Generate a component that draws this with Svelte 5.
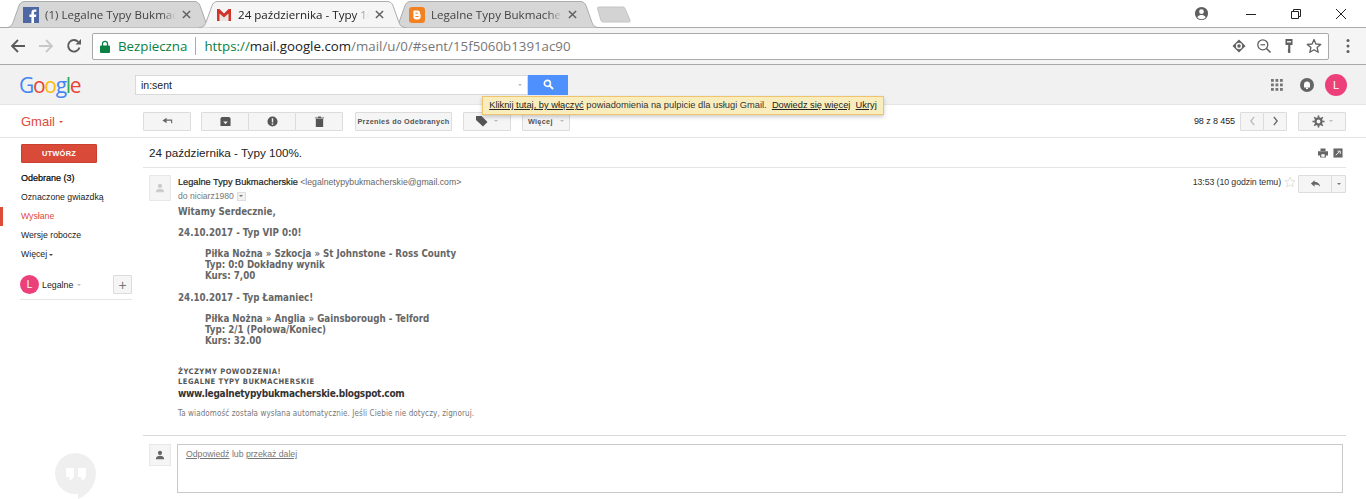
<script>
  const tabs = [
    { title: '(1) Legalne Typy Bukmacherskie', icon: 'fb', active: false },
    { title: '24 października - Typy 100%.', icon: 'gm', active: true },
    { title: 'Legalne Typy Bukmacherskie', icon: 'bl', active: false }
  ];
  const folders = [
    { label: 'Odebrane (3)', cls: 'strong' },
    { label: 'Oznaczone gwiazdką', cls: '' },
    { label: 'Wysłane', cls: 'current' },
    { label: 'Wersje robocze', cls: '' }
  ];
</script>

<div class="page">
  <div class="tabstrip">
    {#each tabs as tab}
      <div class="tab" class:active={tab.active}>
        <svg class="tabshape" viewBox="0 0 208 28" preserveAspectRatio="none">
          <path d="M0 27.5 C5 27.5 6 25 7.5 21 L13 5 C14 2 16 .5 19 .5 H189 C192 .5 194 2 195 5 L200.500 21 C202 25 203 27.500 208 27.500" fill={tab.active ? '#f5f5f5' : '#d6d6d6'} stroke="#a9a9a9" />
        </svg>
        {#if tab.icon === 'fb'}
          <svg class="fav" viewBox="0 0 16 16"><rect width="16" height="16" fill="#4c67a1" /><path d="M11 16V10h2l.3-2.500H11V6c0-.8.3-1.200 1.200-1.200h1.200V2.600C13 2.500 12.300 2.500 11.500 2.500 9.600 2.500 8.400 3.600 8.400 5.700v1.800H6.400V10h2v6z" fill="#fff" /></svg>
        {:else if tab.icon === 'gm'}
          <svg class="fav" viewBox="0 0 16 16"><path d="M3.500 6.500V14h9V6.500L8 10.500z" fill="#e9e6e2" /><path d="M1 2h2.500L8 6.500 12.500 2H15v12h-2.500V6.500L8 10.500 3.500 6.500V14H1z" fill="#d0352a" /></svg>
        {:else}
          <svg class="fav" viewBox="0 0 16 16"><rect width="16" height="16" rx="3" fill="#f48120" /><path d="M5 3.500h3.800a2.200 2.200 0 0 1 2.200 2.200v1.300h.6v2.800A2.700 2.700 0 0 1 8.900 12.500H7.100a2.700 2.700 0 0 1-2.700-2.700V4.100A.6.6 0 0 1 5 3.500z" fill="#fff" /><path d="M6.400 5.700h2.400v1.100H6.400zM6.400 9h3.200v1.100H6.400z" fill="#f48120" /></svg>
        {/if}
        <span class="tabtitle">{tab.title}</span>
        <svg class="tabx" viewBox="0 0 10 10"><path d="M1 1l8 8M9 1l-8 8" stroke="#5f5f5f" stroke-width="1.600" /></svg>
      </div>
    {/each}
    <svg class="newtab" viewBox="0 0 36 17"><path d="M1.500 2.500Q1.300 1 3 1H27Q28.500 1 29 2.500L34 14Q34.500 16 33 16H7Q5.500 16 5 14.500z" fill="#d3d3d3" stroke="#c4c4c4" /></svg>
    <div class="winctl">
      <svg class="prof" viewBox="0 0 16 16"><circle cx="8" cy="8" r="7" fill="#5f5f5f" /><circle cx="8" cy="6" r="2.500" fill="#fff" /><path d="M3.500 12c1-2 3-2.500 4.500-2.500s3.500.5 4.500 2.500C11.500 13.500 9.500 14 8 14s-3.500-.5-4.500-2z" fill="#fff" /></svg>
      <svg class="ctl" viewBox="0 0 12 12"><path d="M1 6.500h10" stroke="#222" /></svg>
      <svg class="ctl" viewBox="0 0 12 12"><path d="M1.500 3.500h7v7h-7zM3.500 3.500v-2h7v7h-2" fill="none" stroke="#222" /></svg>
      <svg class="ctl" viewBox="0 0 12 12"><path d="M1 1l10 10M11 1L1 11" stroke="#222" /></svg>
    </div>
  </div>

  <div class="toolbar">
    <svg class="nav" viewBox="0 0 16 16"><path d="M15 8H2M8 2L2 8l6 6" fill="none" stroke="#5a5a5a" stroke-width="1.800" /></svg>
    <svg class="nav" viewBox="0 0 16 16"><path d="M1 8h13M8 2l6 6-6 6" fill="none" stroke="#c8c8c8" stroke-width="1.800" /></svg>
    <svg class="nav" viewBox="0 0 16 16"><path d="M13.500 9.500A5.800 5.800 0 1 1 12.200 3.800" fill="none" stroke="#5a5a5a" stroke-width="1.900" /><path d="M9.500 6.500H15V1z" fill="#5a5a5a" /></svg>
    <div class="omnibox">
      <svg class="lock" viewBox="0 0 10 13"><path d="M2.500 6V3.800a2.500 2.500 0 0 1 5 0V6" fill="none" stroke="#0b8043" stroke-width="1.300" /><rect y="5.500" width="10" height="7.500" rx="1" fill="#0b8043" /></svg>
      <span class="secure">Bezpieczna</span>
      <span class="sep"></span>
      <span class="url"><span class="scheme">https://</span><span class="host">mail.google.com</span>/mail/u/0/#sent/15f5060b1391ac90</span>
      <span class="omnicons">
        <svg class="oi" viewBox="0 0 16 16"><path d="M8 1.500L14.500 8 8 14.500 1.500 8z" fill="#5f5f5f" /><circle cx="8" cy="8" r="3.200" fill="#f4f4f4" /><circle cx="8" cy="8" r="1.700" fill="#5f5f5f" /></svg>
        <svg class="oi" viewBox="0 0 16 16"><circle cx="6.800" cy="6.800" r="5" fill="none" stroke="#5f5f5f" stroke-width="1.300" /><path d="M10.500 10.500l4 4" stroke="#5f5f5f" stroke-width="1.600" /><path d="M4.500 6.800h4.600" stroke="#5f5f5f" stroke-width="1.200" /></svg>
        <svg class="oi" viewBox="0 0 16 16"><path d="M4.500 1h7v6H9.300v8H7.500l-.8-1 .5-1-.5-1 .5-1V7H4.500z" fill="#5f5f5f" /><rect x="6" y="3" width="4" height="1.500" fill="#eee" /></svg>
        <svg class="oi" viewBox="0 0 16 16"><path d="M8 1.500l1.900 4.500 4.800.4-3.600 3.200 1.100 4.700L8 11.800l-4.200 2.500 1.100-4.700L1.300 6.400 6.100 6z" fill="none" stroke="#5f5f5f" stroke-width="1.300" stroke-linejoin="round" /></svg>
      </span>
    </div>
    <svg class="dots" viewBox="0 0 4 16"><circle cx="2" cy="2.500" r="1.500" fill="#5f5f5f" /><circle cx="2" cy="8" r="1.500" fill="#5f5f5f" /><circle cx="2" cy="13.500" r="1.500" fill="#5f5f5f" /></svg>
  </div>

  <div class="gbar">
    <div class="logo"><span class="b">G</span><span class="r">o</span><span class="y">o</span><span class="b">g</span><span class="g">l</span><span class="r">e</span></div>
    <div class="search">
      <div class="searchbox"><span>in:sent</span><i class="caret grey"></i></div>
      <button class="searchbtn" aria-label="Szukaj">
        <svg viewBox="0 0 12 12"><circle cx="4.800" cy="4.800" r="3.300" fill="none" stroke="#fff" stroke-width="1.800" /><path d="M7.200 7.200l3.800 3.800" stroke="#fff" stroke-width="2.200" /></svg>
      </button>
    </div>
    <div class="gright">
      <svg class="apps" viewBox="0 0 12 12" fill="#757575">
        {#each [0, 4.500, 9] as y}
          {#each [0, 4.500, 9] as x}
            <rect {x} {y} width="2.800" height="2.800" />
          {/each}
        {/each}
      </svg>
      <svg class="bell" viewBox="0 0 14 14"><circle cx="7" cy="7" r="7" fill="#666" /><path d="M4 9.500V6.500a3 3 0 0 1 6 0v3z" fill="#fff" /><rect x="6" y="9.500" width="2" height="1.500" fill="#fff" /></svg>
      <span class="avatar big">L</span>
    </div>
  </div>

  <div class="notice">
    <a href="#n">Kliknij tutaj, by włączyć</a> powiadomienia na pulpicie dla usługi Gmail. &nbsp;<a href="#n">Dowiedz się więcej</a> &nbsp;<a href="#n">Ukryj</a>
  </div>

  <div class="actionrow">
    <div class="gmailname">Gmail <i class="caret red"></i></div>
    <div class="actions">
      <button class="btn w48" aria-label="Wróć">
        <svg viewBox="0 0 12 10"><path d="M5 1v6L.5 4z" fill="#666" /><path d="M4 3.500h6.500V7" fill="none" stroke="#666" stroke-width="1.200" /></svg>
      </button>
      <div class="group">
        <button class="btn w48" aria-label="Archiwizuj"><svg viewBox="0 0 12 11"><path d="M.5 2L2 .5h8L11.500 2v8.500H.5z" fill="#555" /><path d="M6 8.500L3.500 5.500h5z" fill="#eee" /></svg></button>
        <button class="btn w48" aria-label="Spam"><svg viewBox="0 0 12 12"><circle cx="6" cy="6" r="5.500" fill="#555" /><rect x="5.200" y="2.500" width="1.600" height="4.500" fill="#eee" /><rect x="5.200" y="8" width="1.600" height="1.600" fill="#eee" /></svg></button>
        <button class="btn w48" aria-label="Usuń"><svg viewBox="0 0 12 12"><path d="M2 3h8v9H2zM1 1.500h3.500V.5h3v1H11V2.500H1z" fill="#555" /></svg></button>
      </div>
      <button class="btn textbtn move">Przenieś do Odebranych</button>
      <button class="btn w48 label" aria-label="Etykiety"><svg viewBox="0 0 12 12"><path d="M0 1h5.500L11.500 7 7 11.500 0 5z" fill="#555" /></svg><i class="caret grey"></i></button>
      <button class="btn textbtn more">Więcej <i class="caret grey"></i></button>
    </div>
    <div class="pager">
      <span class="count">98 z 8 455</span>
      <div class="group">
        <button class="btn pg" aria-label="Nowsze"><svg viewBox="0 0 8 12"><path d="M6 1L2 6l4 5" fill="none" stroke="#bbb" stroke-width="1.600" /></svg></button>
        <button class="btn pg" aria-label="Starsze"><svg viewBox="0 0 8 12"><path d="M2 1l4 5-4 5" fill="none" stroke="#666" stroke-width="1.600" /></svg></button>
      </div>
      <button class="btn gear" aria-label="Ustawienia">
        <svg viewBox="0 0 14 14"><circle cx="7" cy="7" r="3.300" fill="none" stroke="#666" stroke-width="2.400" /><path d="M7 .5v13M.5 7h13M2.400 2.400l9.200 9.200M11.600 2.400l-9.200 9.200" stroke="#666" stroke-width="1.800" stroke-dasharray="2.400 8.200" /></svg>
        <i class="caret grey"></i>
      </button>
    </div>
  </div>

  <div class="content">
    <aside class="side">
      <button class="compose">UTWÓRZ</button>
      <nav class="folders">
        {#each folders as f}
          <div class="folder {f.cls}">{f.label}</div>
        {/each}
        <div class="folder">Więcej <i class="caret dark"></i></div>
      </nav>
      <div class="account">
        <span class="avatar">L</span>
        <span class="accname">Legalne</span>
        <i class="caret grey"></i>
        <button class="btn plus" aria-label="Nowa rozmowa">+</button>
      </div>
      <svg class="ghost" viewBox="0 0 41 46"><path d="M20.500 0a20.500 20.500 0 0 0 0 41H23V46C33 42 41 32 41 20.500A20.500 20.500 0 0 0 20.500 0z" fill="#efefef" /><path d="M11 15h8v7c0 3-2 5-4.500 5.500V24H11zM23 15h8v7c0 3-2 5-4.500 5.500V24H23z" fill="#fff" /></svg>
    </aside>

    <main class="thread">
      <div class="subject">
        <h2>24 października - Typy 100%.</h2>
        <span class="subicons">
          <svg viewBox="0 0 12 11"><path d="M3 0h6v3H3zM0 3.500h12V8.500H9.500V11h-7V8.500H0z" fill="#666" /><rect x="4" y="7" width="4" height="3" fill="#fff" /></svg>
          <svg viewBox="0 0 11 11"><rect width="10" height="10" x=".5" y=".5" fill="#666" /><path d="M3 8l4-4M5 3.500h3v3" stroke="#fff" fill="none" /></svg>
        </span>
      </div>

      <article class="message">
        <span class="pic"><svg viewBox="0 0 12 12"><circle cx="6" cy="3.500" r="2.500" fill="#ccc" /><path d="M1 11c0-3 2.500-4 5-4s5 1 5 4z" fill="#ccc" /></svg></span>
        <div class="msgbody">
          <div class="msghead">
            <div>
              <div class="from"><b>Legalne Typy Bukmacherskie</b> <span>&lt;legalnetypybukmacherskie@gmail.com&gt;</span></div>
              <div class="to">do niciarz1980 <span class="toggle"><i class="caret darkgrey"></i></span></div>
            </div>
            <div class="meta">
              <span>13:53 (10 godzin temu)</span>
              <svg class="star" viewBox="0 0 16 16"><path d="M8 1.500l1.900 4.500 4.800.4-3.600 3.200 1.100 4.700L8 11.800l-4.200 2.500 1.100-4.700L1.300 6.400 6.100 6z" fill="none" stroke="#ddd" stroke-width="1.200" /></svg>
              <div class="group">
                <button class="btn rep" aria-label="Odpowiedz"><svg viewBox="0 0 12 10"><path d="M5 1L1 4.500 5 8V5.500c3 0 5 .8 6 2.500 0-3-2-5-6-5.500z" fill="#666" /></svg></button>
                <button class="btn repmore" aria-label="Więcej"><i class="caret darkgrey"></i></button>
              </div>
            </div>
          </div>

          <div class="mail">
            <p>Witamy Serdecznie,</p>
            <p class="gap">24.10.2017 - Typ VIP 0:0!</p>
            <p class="gap in">Piłka Nożna » Szkocja » St Johnstone - Ross County<br />Typ: 0:0 Dokładny wynik<br />Kurs: 7,00</p>
            <p class="gap second">24.10.2017 - Typ Łamaniec!</p>
            <p class="gap in">Piłka Nożna » Anglia » Gainsborough - Telford<br />Typ: 2/1 (Połowa/Koniec)<br />Kurs: 32.00</p>
            <p class="caps">ŻYCZYMY POWODZENIA!<br />LEGALNE TYPY BUKMACHERSKIE</p>
            <p class="site">www.legalnetypybukmacherskie.blogspot.com</p>
            <p class="auto">Ta wiadomość została wysłana automatycznie. Jeśli Ciebie nie dotyczy, zignoruj.</p>
          </div>
        </div>
      </article>

      <div class="reply">
        <span class="pic small"><svg viewBox="0 0 12 12"><circle cx="6" cy="3.500" r="2.500" fill="#666" /><path d="M1 11c0-3 2.500-4 5-4s5 1 5 4z" fill="#666" /></svg></span>
        <div class="replybox"><a href="#r">Odpowiedź</a> lub <a href="#r">przekaż dalej</a></div>
      </div>
    </main>
  </div>
</div>

<style>
  :global(body) { margin: 0; background: #fff; }
  .page { position: relative; width: 1366px; height: 499px; overflow: hidden; font-family: "Liberation Sans", Arial, sans-serif; font-size: 10px; color: #222; }
  button { font-family: inherit; }

  /* browser chrome */
  .tabstrip { height: 28px; display: flex; align-items: flex-end; padding-left: 6px; box-sizing: border-box; border-bottom: 1px solid #a9a9a9; background: #fff; }
  .tab { position: relative; width: 207px; height: 27px; margin-right: -14px; margin-bottom: -1px; display: flex; align-items: center; padding: 0 22px 0 17px; box-sizing: border-box; gap: 6px; font-family: "Open Sans", sans-serif; font-size: 11.600px; color: #444; }
  .tab.active { z-index: 2; color: #222; }
  .tabshape { position: absolute; inset: 0; width: 100%; height: 100%; }
  .fav, .tabtitle, .tabx { position: relative; }
  .fav { width: 16px; height: 16px; flex: none; }
  .tabtitle { flex: 1; overflow: hidden; white-space: nowrap; -webkit-mask-image: linear-gradient(to left, transparent 0, #000 14px); mask-image: linear-gradient(to left, transparent 0, #000 14px); }
  .tabx { width: 9px; height: 9px; flex: none; }
  .newtab { width: 36px; height: 17px; margin-left: 11px; margin-bottom: 4px; }
  .winctl { margin-left: auto; align-self: flex-start; display: flex; align-items: center; height: 27px; padding-right: 19px; }
  .prof { width: 15px; height: 15px; margin-right: 36px; }
  .ctl { width: 12px; height: 12px; margin-left: 33px; }
  .prof + .ctl { margin-left: 0; }

  .toolbar { height: 37px; box-sizing: border-box; background: #f5f5f5; border-bottom: 1px solid #a9a9a9; display: flex; align-items: center; padding-left: 10px; }
  .nav { width: 16px; height: 16px; margin-right: 12px; }
  .omnibox { width: 1237px; height: 27px; margin-left: -2px; box-sizing: border-box; background: #fff; border: 1px solid #a9a9a9; border-radius: 2px; display: flex; align-items: center; padding: 0 6px 0 7px; font-family: "Open Sans", sans-serif; font-size: 13.300px; white-space: nowrap; }
  .lock { width: 10px; height: 13px; margin-right: 8px; }
  .secure { color: #0b8043; }
  .sep { width: 1px; height: 18px; background: #aaa; margin: 0 8px; }
  .url { color: #777; }
  .scheme { color: #0b8043; }
  .host { color: #222; }
  .omnicons { margin-left: auto; display: flex; gap: 9px; align-items: center; }
  .oi { width: 16px; height: 16px; }
  .dots { width: 4px; height: 16px; margin-left: 17px; }

  .gbar { height: 40px; box-sizing: border-box; background: #f1f1f1; border-bottom: 1px solid #e5e5e5; display: flex; align-items: center; }
  .logo { width: 135px; padding-left: 19px; box-sizing: border-box; font-family: "Open Sans", sans-serif; font-size: 21px; letter-spacing: -1.300px; line-height: 1; margin-top: 1px; }
  .b { color: #4285f4; } .r { color: #ea4335; } .y { color: #fbbc05; } .g { color: #34a853; }
  .search { display: flex; height: 20px; }
  .searchbox { width: 393px; box-sizing: border-box; background: #fff; border: 1px solid #d9d9d9; display: flex; align-items: center; justify-content: space-between; padding: 0 5px 0 5px; font-size: 10.500px; color: #222; }
  .searchbtn { width: 40px; border: 0; padding: 0; background: #4d90fe; display: flex; align-items: center; justify-content: center; }
  .searchbtn svg { width: 11px; height: 11px; }
  .gright { margin-left: auto; display: flex; align-items: center; padding-right: 19px; }
  .apps { width: 12px; height: 12px; margin-right: 17px; }
  .bell { width: 14px; height: 14px; margin-right: 11px; }
  .avatar { width: 19px; height: 19px; border-radius: 50%; background: #ec407a; color: #fff; font-size: 10px; display: flex; align-items: center; justify-content: center; flex: none; }
  .avatar.big { width: 22px; height: 22px; font-size: 11px; }

  .caret { display: inline-block; width: 0; height: 0; border: 2.500px solid transparent; border-bottom: 0; border-top: 2.500px solid #aaa; vertical-align: middle; }
  .caret.grey { border-top-color: #bbb; }
  .caret.red { border-top-color: #dd4b39; }
  .caret.dark { border-top-color: #444; }
  .caret.darkgrey { border-top-color: #777; }

  .notice { position: absolute; left: 482px; top: 96px; width: 402px; height: 19px; box-sizing: border-box; background: #f9edbe; border: 1px solid #f0c36d; box-shadow: 0 2px 4px rgba(0,0,0,.2); z-index: 5; text-align: center; line-height: 17px; font-size: 9.300px; white-space: nowrap; color: #333; }
  .notice a { color: #222; text-decoration: underline; }

  .actionrow { height: 33px; box-sizing: border-box; border-bottom: 1px solid #e5e5e5; display: flex; align-items: center; }
  .gmailname { width: 143px; padding-left: 21px; box-sizing: border-box; font-size: 13px; color: #dd4b39; }
  .actions { display: flex; align-items: center; gap: 0; }
  .btn { height: 19px; box-sizing: border-box; background: #f5f5f5; border: 1px solid #dcdcdc; padding: 0; display: flex; align-items: center; justify-content: center; color: #444; border-radius: 1px; }
  .group { display: flex; }
  .group .btn + .btn { margin-left: -1px; }
  .w48 { width: 48px; }
  .actions > .btn, .actions > .group { margin-right: 10px; }
  .actions > .group { margin-right: 12px; }
  .actions .btn svg { width: 11px; height: 11px; }
  .textbtn { font-size: 7.300px; font-weight: bold; letter-spacing: .3px; color: #555; white-space: pre; }
  .move { width: 97px; margin-right: 11px !important; }
  .label { margin-right: 11px !important; gap: 6px; }
  .label svg { width: 12px !important; height: 12px !important; }
  .more { width: 48px; gap: 3px; }
  .more .caret { margin-left: 2px; }
  .pager { margin-left: auto; display: flex; align-items: center; padding-right: 20px; font-size: 9px; }
  .count { margin-right: 5px; letter-spacing: -.1px; }
  .pg { width: 24px; }
  .pg svg { width: 7px; height: 10px; }
  .gear { width: 48px; margin-left: 11px; gap: 4px; }
  .gear svg { width: 13px; height: 13px; }

  .content { display: flex; }
  .side { position: relative; width: 143px; flex: none; height: 361px; }
  .compose { display: block; width: 76px; height: 19px; margin: 6px 0 6px 21px; padding: 0; background: #d94a38; color: #fff; border: 1px solid #c9402f; border-radius: 1px; font-size: 7.500px; font-weight: bold; letter-spacing: .2px; }
  .folder { height: 19px; line-height: 19px; padding-left: 21px; font-size: 8.700px; color: #222; white-space: nowrap; }
  .folder.strong { font-size: 9px; color: #000; -webkit-text-stroke: .2px #000; }
  .folder.current { color: #dd4b39; box-shadow: inset 3px 0 0 #dd4b39; }
  .account { margin: 11px 11px 0 20px; padding-bottom: 5px; border-bottom: 1px solid #e5e5e5; display: flex; align-items: center; font-size: 8.800px; }
  .accname { margin: 0 4px 0 3px; }
  .plus { width: 19px; margin-left: auto; font-size: 14px; line-height: 1; color: #777; }
  .ghost { position: absolute; left: 55px; top: 315px; width: 41px; height: 46px; }

  .thread { width: 1203px; flex: none; }
  .subject { height: 30px; box-sizing: border-box; border-bottom: 1px solid #e5e5e5; display: flex; align-items: center; justify-content: space-between; padding: 0 3px 0 6px; }
  .subject h2 { margin: 0; font-size: 11.700px; font-weight: normal; color: #222; }
  .subicons { display: flex; gap: 5px; }
  .subicons svg { width: 10px; height: 10px; }

  .message { display: flex; padding: 7px 0 0 6px; border-bottom: 1px solid #d8d8d8; height: 268px; box-sizing: border-box; }
  .pic { width: 20px; height: 24px; padding: 0; flex: none; background: #f5f5f5; border: 1px solid #e8e8e8; box-sizing: content-box; display: flex; align-items: center; justify-content: center; margin-right: 7px; }
  .pic svg { width: 10px; height: 10px; }
  .msgbody { flex: 1; min-width: 0; }
  .msghead { display: flex; justify-content: space-between; }
  .from { font-size: 8.700px; line-height: 14px; color: #222; }
  .from b { font-size: 9.200px; font-weight: normal; -webkit-text-stroke: .2px #222; }
  .from span { color: #666; }
  .to { font-size: 8.600px; line-height: 14px; color: #777; display: flex; align-items: center; gap: 3px; }
  .toggle { display: flex; align-items: center; justify-content: center; width: 7px; height: 7px; background: #f1f1f1; border: 1px solid #ddd; }
  .toggle .caret { border-width: 2px; border-bottom: 0; }
  .meta { display: flex; align-items: flex-start; font-size: 8.800px; letter-spacing: -.1px; line-height: 14px; color: #333; }
  .star { width: 12px; height: 12px; margin: 1px 2px 0 3px; }
  .rep { width: 34px; height: 18px; }
  .rep svg { width: 11px; height: 10px; }
  .repmore { width: 15px; height: 18px; }

  .mail { font-family: "DejaVu Sans Condensed", "DejaVu Sans", Verdana, sans-serif; font-stretch: condensed; font-weight: bold; font-size: 9.700px; line-height: 11px; color: #666; padding-top: 3px; }
  .mail p { margin: 0; }
  .mail .gap { margin-top: 10px; }
  .mail .second { margin-top: 11px; }
  .mail .in { padding-left: 27px; }
  .mail .caps { margin-top: 21px; font-size: 7.500px; letter-spacing: .5px; line-height: 10px; color: #555; }
  .mail .site { font-size: 10px; letter-spacing: -.25px; line-height: 13px; color: #333; }
  .mail .auto { margin-top: 8px; font-weight: normal; font-size: 8px; color: #777; letter-spacing: .1px; }

  .reply { display: flex; padding: 8px 3px 0 6px; }
  .pic.small { width: 20px; height: 20px; margin-right: 6px; }
  .replybox { flex: 1; height: 49px; box-sizing: border-box; border: 1px solid #c8c8c8; padding: 4px 8px; font-size: 8.700px; color: #777; }
  .replybox a { color: #777; text-decoration: underline; }
</style>
